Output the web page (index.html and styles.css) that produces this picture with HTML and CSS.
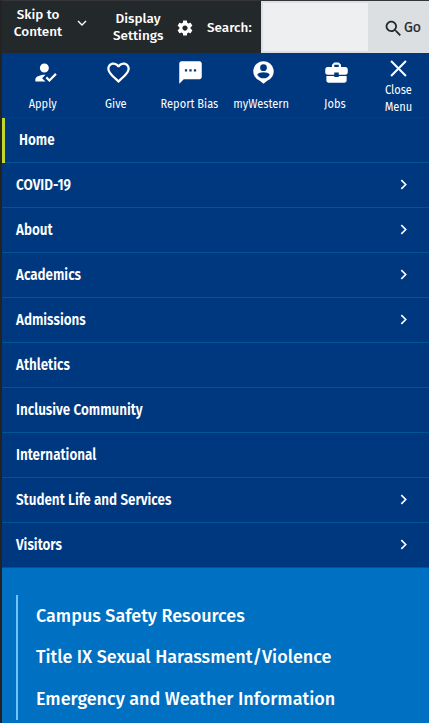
FILE: index.html
```html
<!DOCTYPE html>
<html lang="en">
<head>
<meta charset="utf-8">
<title>Western menu</title>
<link rel="stylesheet" href="styles.css">
</head>
<body>
<header class="topbar">
  <button class="skip"><span>Skip to<br>Content</span><svg class="down" viewBox="0 0 10 6"><path d="M1 1l4 4 4-4"/></svg></button>
  <button class="display"><span>Display<br>Settings</span><svg class="gear" viewBox="0 0 24 24"><path d="M19.43 12.98c.04-.32.07-.64.07-.98s-.03-.66-.07-.98l2.11-1.65c.19-.15.24-.42.12-.64l-2-3.46c-.12-.22-.39-.3-.61-.22l-2.49 1c-.52-.4-1.08-.73-1.69-.98l-.38-2.65C14.46 2.18 14.25 2 14 2h-4c-.25 0-.46.18-.49.42l-.38 2.65c-.61.25-1.17.59-1.69.98l-2.49-1c-.23-.09-.49 0-.61.22l-2 3.46c-.13.22-.07.49.12.64l2.11 1.65c-.04.32-.07.65-.07.98s.03.66.07.98l-2.11 1.65c-.19.15-.24.42-.12.64l2 3.46c.12.22.39.3.61.22l2.49-1c.52.4 1.08.73 1.69.98l.38 2.65c.03.24.24.42.49.42h4c.25 0 .46-.18.49-.42l.38-2.65c.61-.25 1.17-.59 1.69-.98l2.49 1c.23.09.49 0 .61-.22l2-3.46c.12-.22.07-.49-.12-.64l-2.11-1.65zM12 15.500c-1.930 0-3.500-1.570-3.500-3.500s1.570-3.500 3.500-3.500 3.500 1.570 3.500 3.500-1.570 3.500-3.500 3.500z"/></svg></button>
  <label class="search-label" for="q">Search:</label>
  <input id="q" class="search" type="text">
  <button class="go"><svg viewBox="0 0 24 24"><path d="M15.500 14h-.79l-.28-.27C15.410 12.590 16 11.110 16 9.500 16 5.910 13.090 3 9.500 3S3 5.910 3 9.500 5.910 16 9.500 16c1.610 0 3.090-.59 4.230-1.570l.27.28v.79l5 4.990L20.490 19l-4.990-5zm-6 0C7.010 14 5 11.990 5 9.500S7.010 5 9.500 5 14 7.010 14 9.500 11.990 14 9.500 14z"/></svg><span>Go</span></button>
</header>
<nav class="quick">
  <a class="apply"><svg viewBox="0 0 24 24"><path d="M9 17l3-2.940c-.39-.04-.68-.06-1-.06-2.670 0-8 1.340-8 4v2h9l-3-3zm2-5c2.210 0 4-1.790 4-4s-1.790-4-4-4-4 1.790-4 4 1.790 4 4 4M15.470 20.500L12 17l1.400-1.410 2.070 2.080 5.130-5.170 1.400 1.410z"/></svg><span>Apply</span></a>
  <a class="give"><svg viewBox="0 0 24 24"><path d="M16.500 3c-1.740 0-3.410.81-4.500 2.090C10.910 3.810 9.240 3 7.500 3 4.420 3 2 5.420 2 8.500c0 3.780 3.400 6.860 8.550 11.540L12 21.350l1.450-1.320C18.600 15.360 22 12.280 22 8.500 22 5.420 19.580 3 16.500 3zm-4.400 15.550l-.1.1-.1-.1C7.140 14.240 4 11.390 4 8.500 4 6.500 5.500 5 7.500 5c1.540 0 3.040.99 3.570 2.360h1.870C13.460 5.990 14.960 5 16.500 5c2 0 3.500 1.500 3.500 3.500 0 2.890-3.140 5.740-7.900 10.050z"/></svg><span>Give</span></a>
  <a class="report"><svg viewBox="0 0 24 24"><path d="M20 2H4c-1.100 0-1.990.9-1.990 2L2 22l4-4h14c1.100 0 2-.9 2-2V4c0-1.100-.9-2-2-2zM9 11H7V9h2v2zm4 0h-2V9h2v2zm4 0h-2V9h2v2z"/></svg><span>Report Bias</span></a>
  <a class="western"><svg viewBox="0 0 24 24"><path fill-rule="evenodd" d="M12 2a9 9 0 0 0-3.300 17.400L12 22l3.300-2.600A9 9 0 0 0 12 2zm0 2.700a3 3 0 1 1 0 6 3 3 0 0 1 0-6zM6.400 14c.9-1.600 3.400-2.200 5.600-2.200s4.700.6 5.600 2.200a6.500 6.500 0 0 1-11.200 0z"/></svg><span>myWestern</span></a>
  <a class="jobs"><svg viewBox="0 0 24 24"><path d="M10 16v-1H3.010L3 19c0 1.110.89 2 2 2h14c1.110 0 2-.89 2-2v-4h-7v1h-4zm10-9h-4.010V5l-2-2h-4l-2 2v2H4c-1.100 0-2 .9-2 2v3c0 1.110.89 2 2 2h6v-2h4v2h6c1.100 0 2-.9 2-2V9c0-1.100-.9-2-2-2zm-6 0h-4V5h4v2z"/></svg><span>Jobs</span></a>
  <a class="close"><svg viewBox="0 0 16 16"><path d="M1 1l14 14M15 1L1 15"/></svg><span>Close<br>Menu</span></a>
</nav>
<ul class="menu">
  <li class="current"><span>Home</span></li>
  <li><span>COVID-19</span><svg viewBox="0 0 6 10"><path d="M1 1l4 4-4 4"/></svg></li>
  <li><span>About</span><svg viewBox="0 0 6 10"><path d="M1 1l4 4-4 4"/></svg></li>
  <li><span>Academics</span><svg viewBox="0 0 6 10"><path d="M1 1l4 4-4 4"/></svg></li>
  <li><span>Admissions</span><svg viewBox="0 0 6 10"><path d="M1 1l4 4-4 4"/></svg></li>
  <li><span>Athletics</span></li>
  <li><span>Inclusive Community</span></li>
  <li><span>International</span></li>
  <li><span>Student Life and Services</span><svg viewBox="0 0 6 10"><path d="M1 1l4 4-4 4"/></svg></li>
  <li><span>Visitors</span><svg viewBox="0 0 6 10"><path d="M1 1l4 4-4 4"/></svg></li>
</ul>
<footer class="safety">
  <div class="links">
    <a>Campus Safety Resources</a>
    <a>Title IX Sexual Harassment/Violence</a>
    <a>Emergency and Weather Information</a>
  </div>
</footer>
</body>
</html>
```

FILE: styles.css
```css
* { box-sizing: border-box; }
body {
  margin: 0;
  height: 723px;
  overflow: hidden;
  border-left: 2px solid #232326;
  border-top: 1px solid #35343a;
  background: #0070c2;
  color: #fff;
  font-family: "Fira Sans", "Noto Sans", sans-serif;
}
svg { display: block; flex: none; fill: currentColor; }
button { border: 0; padding: 0; background: none; color: inherit; font: inherit; }
.topbar {
  display: flex;
  height: 52px;
  background: #23282b;
  font-size: 13.5px;
  font-weight: 500;
  line-height: 17px;
}
.skip, .display { display: flex; text-align: center; }
.skip { width: 94px; padding: 5px 0 0 11px; gap: 14px; }
.skip span { width: 50px; white-space: nowrap; }
.down { width: 10px; height: 6px; margin-top: 14px; fill: none; stroke: #fff; stroke-width: 1.4; }
.display { width: 111px; padding: 9px 0 0 17px; gap: 13px; }
.display span { width: 50px; white-space: nowrap; }
.gear { width: 18px; height: 18px; margin-top: 9px; }
.search-label { width: 54px; padding-top: 18px; white-space: nowrap; }
.search { width: 107px; border: 2px solid #dcdfe2; border-right: 0; background: #eeeff1; padding: 0; outline: 0; }
.go { display: flex; flex: 1; padding: 17px 0 0 15px; background: #dcdfe2; color: #23282b; font-weight: 400; font-size: 14px; }
.go svg { width: 21px; height: 21px; margin-right: 0; }
.go span { padding-top: 1px; -webkit-text-stroke: .2px; }
.quick {
  display: flex;
  height: 64px;
  background: #003880;
  font-size: 13.2px;
  line-height: 17px;
}
.quick a { display: flex; flex-direction: column; align-items: center; width: 73px; padding-top: 6px; }
.quick a svg { position: relative; left: 2px; width: 27px; height: 27px; }
.quick a span { margin-top: 9px; white-space: nowrap; text-align: center; transform: scaleX(.84); }
.quick .apply { width: 82px; }
.quick .give { width: 64px; }
.quick .report { width: 82px; }
.quick .report svg { left: 1px; }
.quick .western { width: 63px; }
.quick .jobs { width: 83px; }
.quick .close { width: 44px; }
.quick .close svg { left: 0; width: 17px; height: 17px; margin-top: 1px; fill: none; stroke: #fff; stroke-width: 1.9; }
.quick .close span { margin-top: 4px; }
.menu { list-style: none; margin: 0; padding: 0; background: #003880; border-top: 1px solid #063d78; }
.menu li {
  display: flex;
  align-items: center;
  justify-content: space-between;
  height: 45px;
  padding: 0 22px 1px 13.5px;
  border-bottom: 1px solid #005595;
  font-size: 16px;
  font-weight: 600;
}
.menu span { transform: scaleX(.84); transform-origin: left; }
.menu svg { width: 7px; height: 11px; fill: none; stroke: #fff; stroke-width: 1.5; }
.menu .current { position: relative; padding-left: 16.5px; }
.menu .current::before { content: ""; position: absolute; left: 0; top: 0; width: 3px; height: 45px; background: #bfd82f; }
.safety { padding: 27px 0 0 14px; }
.links { height: 125px; padding: 9px 0 0 18px; border-left: 2px solid #70c4ff; }
.links a { display: block; height: 41.4px; line-height: 24px; font-size: 18px; font-weight: 500; white-space: nowrap; }
```
